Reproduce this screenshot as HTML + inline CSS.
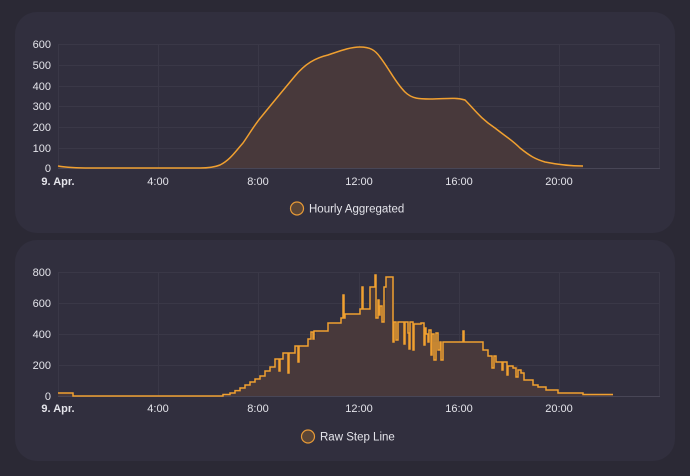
<!DOCTYPE html>
<html><head><meta charset="utf-8"><style>
html,body{margin:0;padding:0;background:#2b2935;width:690px;height:476px;overflow:hidden}
.card{position:absolute;left:15px;width:660px;height:221px;background:#312f3e;border-radius:22px}
svg{position:absolute;left:0;top:0}
text{font-family:"Liberation Sans",sans-serif;font-size:11px;fill:#e4e4ea}
</style></head><body>
<div class="card" style="top:12px"></div>
<div class="card" style="top:240px"></div>
<svg width="690" height="476" viewBox="0 0 690 476">
<defs>
<path id="c1" d="M58 166 C70 168 80 168 90 168 L200 168 C210 168 215 167 220 165 C230 160 235 152 243 143 C250 133 255 124 262 116 C275 100 285 88 295 76 C305 64 315 58 328 55 C340 51 350 47 360 47 C370 47 375 50 380 57 C390 70 395 82 405 92 C412 99 420 99 430 99 C445 99 455 97 465 100 C475 110 480 118 495 128 C505 136 512 140 520 148 C530 156 535 159 545 162 C560 165 570 166 583 166"/>
<path id="c2" d="M58 393H73V396H223V394.5H230V393H235V390.6H240V388H245V385H250V382H255V379H260V376H265V371H270V367H275V359H279V371H280V359H283V353H288V373H289V353H295V346H298V362H299V346H308V339H311V332H313V339H314V331H316V331H328V323H341V318H343V295H344V318H345V314H360V309H362V287H363V309H370V287H375V275H376V318H378V300H379V315H380V306H382V322H384V287H386V277H393V342H394V322H396V340H398V322H404V344H405V322H408V333H409V349H410V322H413V350H414V324H416V324H421V323H424V345H425V328H426V334H428V342H429V330H431V355H432V334H434V360H436V333H438V350H440V342H441V360H443V342H446V342H458V342H463V331H464V342H470V342H483V350H488V356H492V368H494V356H496V362H500V362H502V370H503V362H507V375H508V366H513V368H516V377H518V370H521V373H524V380H528V380H533V385H538V387H546V390H558V393H583V394.5H613"/>
</defs>
<g stroke="#3a3847" stroke-width="1" fill="none">
<path d="M58 44.5H660M58 65.5H660M58 86.5H660M58 106.5H660M58 127.5H660M58 148.5H660"/>
<path d="M58.5 44V168M158.5 44V168M258.5 44V168M359.5 44V168M459.5 44V168M559.5 44V168M659.5 44V168"/>
<path d="M58 272.5H660M58 303.5H660M58 334.5H660M58 365.5H660"/>
<path d="M58.5 272V396M158.5 272V396M258.5 272V396M359.5 272V396M459.5 272V396M559.5 272V396M659.5 272V396"/>
</g>
<path d="M58 168.5H660M58 396.5H660" stroke="#484656"/>
<g text-anchor="end">
<text x="51" y="48">600</text><text x="51" y="69">500</text><text x="51" y="90">400</text><text x="51" y="110">300</text><text x="51" y="131">200</text><text x="51" y="152">100</text><text x="51" y="172">0</text>
<text x="51" y="276">800</text><text x="51" y="307">600</text><text x="51" y="338">400</text><text x="51" y="369">200</text><text x="51" y="400">0</text>
</g>
<g text-anchor="middle">
<text x="58" y="185" font-weight="bold">9. Apr.</text><text x="158" y="185">4:00</text><text x="258" y="185">8:00</text><text x="359" y="185">12:00</text><text x="459" y="185">16:00</text><text x="559" y="185">20:00</text>
<text x="58" y="412" font-weight="bold">9. Apr.</text><text x="158" y="412">4:00</text><text x="258" y="412">8:00</text><text x="359" y="412">12:00</text><text x="459" y="412">16:00</text><text x="559" y="412">20:00</text>
</g>
<path d="M58 166 C70 168 80 168 90 168 L200 168 C210 168 215 167 220 165 C230 160 235 152 243 143 C250 133 255 124 262 116 C275 100 285 88 295 76 C305 64 315 58 328 55 C340 51 350 47 360 47 C370 47 375 50 380 57 C390 70 395 82 405 92 C412 99 420 99 430 99 C445 99 455 97 465 100 C475 110 480 118 495 128 C505 136 512 140 520 148 C530 156 535 159 545 162 C560 165 570 166 583 166 L583 168 L58 168Z" fill="#48393b"/>
<use href="#c1" fill="none" stroke="#f0a030" stroke-width="1.5"/>
<path d="M58 393H73V396H223V394.5H230V393H235V390.6H240V388H245V385H250V382H255V379H260V376H265V371H270V367H275V359H283V353H295V346H308V339H316V331H328V323H341V318H345V314H360V309H370V287H375V300H386V277H393V322H408V322H421V323H424V334H433V342H458V342H483V350H488V356H496V362H507V366H518V370H524V380H533V385H538V387H546V390H558V393H583V394.5H613V396H58Z" fill="#48393b"/>
<use href="#c2" fill="none" stroke="#f0a030" stroke-width="1.5"/>
<circle cx="297" cy="208.5" r="6.5" fill="#5a4536" stroke="#e79a36" stroke-width="1.2"/>
<text x="309" y="212.5" style="font-size:11.5px">Hourly Aggregated</text>
<circle cx="308" cy="436.5" r="6.5" fill="#5a4536" stroke="#e79a36" stroke-width="1.2"/>
<text x="320" y="440.5" style="font-size:11.5px">Raw Step Line</text>
</svg>
</body></html>
